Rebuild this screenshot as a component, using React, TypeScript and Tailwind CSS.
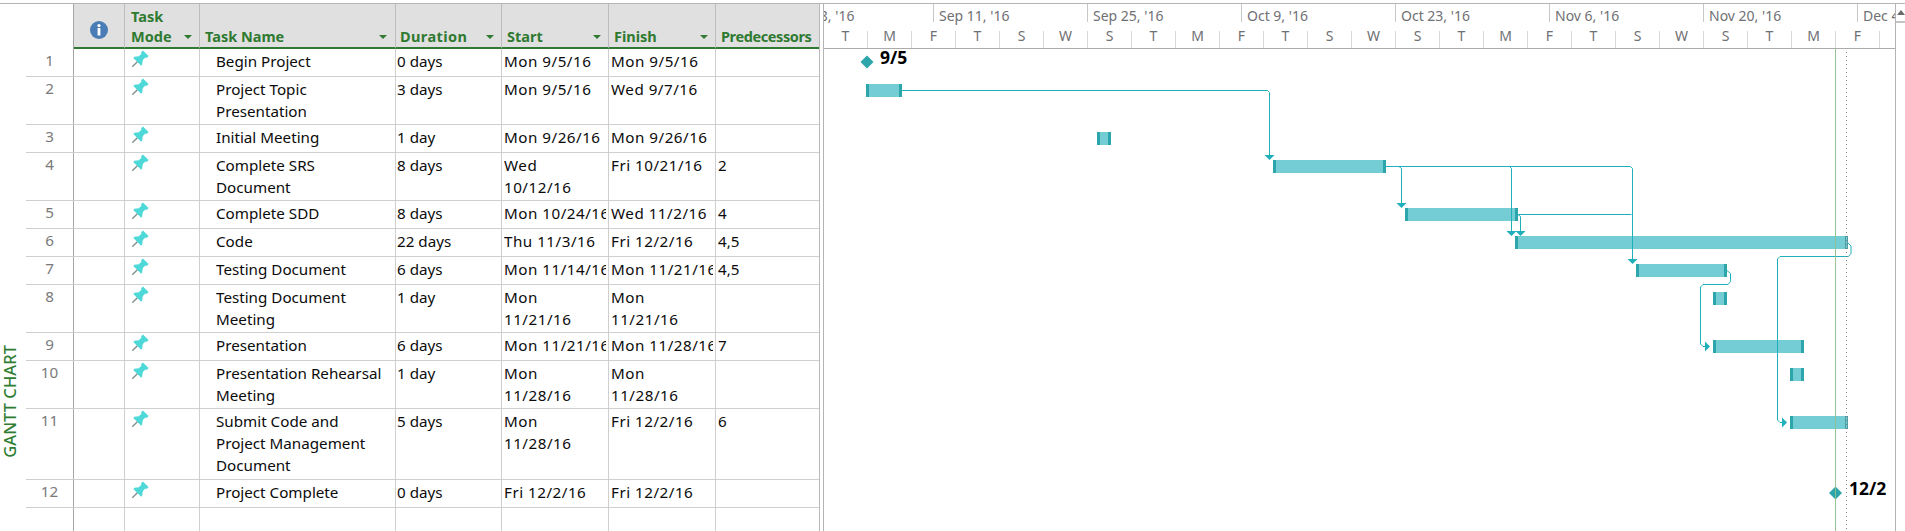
const rows = [
  { id: "1", h: "h-[28px]", name: "Begin Project", dur: "0 days", start: "Mon 9/5/16", finish: "Mon 9/5/16", pred: "" },
  { id: "2", h: "h-[48px]", name: "Project Topic\nPresentation", dur: "3 days", start: "Mon 9/5/16", finish: "Wed 9/7/16", pred: "" },
  { id: "3", h: "h-[28px]", name: "Initial Meeting", dur: "1 day", start: "Mon 9/26/16", finish: "Mon 9/26/16", pred: "" },
  { id: "4", h: "h-[48px]", name: "Complete SRS\nDocument", dur: "8 days", start: "Wed\n10/12/16", finish: "Fri 10/21/16", pred: "2" },
  { id: "5", h: "h-[28px]", name: "Complete SDD", dur: "8 days", start: "Mon 10/24/16", finish: "Wed 11/2/16", pred: "4" },
  { id: "6", h: "h-[28px]", name: "Code", dur: "22 days", start: "Thu 11/3/16", finish: "Fri 12/2/16", pred: "4,5" },
  { id: "7", h: "h-[28px]", name: "Testing Document", dur: "6 days", start: "Mon 11/14/16", finish: "Mon 11/21/16", pred: "4,5" },
  { id: "8", h: "h-[48px]", name: "Testing Document\nMeeting", dur: "1 day", start: "Mon\n11/21/16", finish: "Mon\n11/21/16", pred: "" },
  { id: "9", h: "h-[28px]", name: "Presentation", dur: "6 days", start: "Mon 11/21/16", finish: "Mon 11/28/16", pred: "7" },
  { id: "10", h: "h-[48px]", name: "Presentation Rehearsal\nMeeting", dur: "1 day", start: "Mon\n11/28/16", finish: "Mon\n11/28/16", pred: "" },
  { id: "11", h: "h-[71px]", name: "Submit Code and\nProject Management\nDocument", dur: "5 days", start: "Mon\n11/28/16", finish: "Fri 12/2/16", pred: "6" },
  { id: "12", h: "h-[28px]", name: "Project Complete", dur: "0 days", start: "Fri 12/2/16", finish: "Fri 12/2/16", pred: "" },
];

const majors = ["Sep 11, '16", "Sep 25, '16", "Oct 9, '16", "Oct 23, '16", "Nov 6, '16", "Nov 20, '16"];
const days = "TMFTSWSTMFTSWSTMFTSWSTMF".split("");

// x, x2, y for each task bar, in page pixels
const bars = [
  { x: 866, x2: 902, y: 84 },
  { x: 1097, x2: 1111, y: 132 },
  { x: 1273, x2: 1386, y: 160 },
  { x: 1405, x2: 1518, y: 208 },
  { x: 1515, x2: 1848, y: 236, open: true },
  { x: 1636, x2: 1727, y: 264 },
  { x: 1713, x2: 1727, y: 292 },
  { x: 1713, x2: 1804, y: 340 },
  { x: 1790, x2: 1804, y: 368 },
  { x: 1790, x2: 1848, y: 416, open: true },
];

const links = [
  "M902 90.5H1267.5L1269.5 92.5V156",
  "M1386 166.5H1630.5L1632.5 168.5V260",
  "M1399 166.5L1401.5 168.5V204",
  "M1509.5 166.5L1511.5 168.5V232",
  "M1518 214.5H1631.5",
  "M1518 214.5L1520.5 216.5V232",
  "M1848 243L1851 246V253.5L1848.5 256.5H1780L1777.5 259V420L1780 422.5H1783",
  "M1727 270.5L1730.5 273.5V281.5L1728 284.5H1703L1700.5 287V344L1703 346.5H1706",
];

const downArrows = [
  { x: 1269.5, y: 160 },
  { x: 1401.5, y: 208 },
  { x: 1511.5, y: 236 },
  { x: 1520.5, y: 236 },
  { x: 1632.5, y: 264 },
];
const rightArrows = [
  { x: 1710, y: 346.5 },
  { x: 1787, y: 422.5 },
];

function FilterArrow() {
  return <span className="mb-[7px] h-0 w-0 shrink-0 border-x-4 border-t-[4px] border-x-transparent border-t-[#2f7a30]" />;
}

function InfoIcon() {
  return (
    <svg width="18" height="18" viewBox="0 0 18 18">
      <circle cx="9" cy="9" r="9" fill="#4a7db5" />
      <circle cx="9" cy="4.6" r="1.6" fill="#fff" />
      <rect x="7.6" y="7" width="2.8" height="7.5" fill="#fff" />
    </svg>
  );
}

function PinIcon() {
  return (
    <svg width="16" height="16" viewBox="0 0 16 16" className="overflow-visible">
      <g transform="rotate(45 8 8)">
        <rect x="7.4" y="9" width="1.3" height="8.5" fill="#7d8a8c" />
        <path d="M4 -1.5H12V1L10.8 1.8V5.5L13.5 9V10.5H2.5V9L5.2 5.5V1.8L4 1Z" fill="#4fd8d8" />
      </g>
    </svg>
  );
}

function Cell({ text, className }: { text: string; className: string }) {
  return (
    <div className={`shrink-0 border-r border-[#cfcfcf] pt-[1px] pr-[2px] ${className}`}>
      <div className="overflow-hidden whitespace-pre">{text}</div>
    </div>
  );
}

function TaskTable() {
  return (
    <div className="flex w-[794px] shrink-0 flex-col border-r border-[#b9b9b9]">
      {/* Header */}
      <div className="flex h-[45px] shrink-0 text-[14.5px] leading-[20px] font-bold text-[#2f7a30]">
        <div className="w-[48px] shrink-0 border-r border-[#a6a6a6] bg-white" />
        <div className="flex w-[51px] shrink-0 items-center justify-center border-r border-b-2 border-[#bdbdbd] border-b-[#2f7a30] bg-[#e0e0e0] pt-[8px]">
          <InfoIcon />
        </div>
        <div className="flex w-[75px] shrink-0 items-end justify-between border-r border-b-2 border-[#bdbdbd] border-b-[#2f7a30] bg-[#e0e0e0] pr-[7px] pb-[1px] pl-[6px]">
          <span>
            Task
            <br />
            Mode
          </span>
          <FilterArrow />
        </div>
        <div className="flex w-[196px] shrink-0 items-end justify-between border-r border-b-2 border-[#bdbdbd] border-b-[#2f7a30] bg-[#e0e0e0] pr-[8px] pb-[1px] pl-[5px]">
          <span>Task Name</span>
          <FilterArrow />
        </div>
        <div className="flex w-[106px] shrink-0 items-end justify-between border-r border-b-2 border-[#bdbdbd] border-b-[#2f7a30] bg-[#e0e0e0] pr-[7px] pb-[1px] pl-[4px]">
          <span className="tracking-[0.4px]">Duration</span>
          <FilterArrow />
        </div>
        <div className="flex w-[107px] shrink-0 items-end justify-between border-r border-b-2 border-[#bdbdbd] border-b-[#2f7a30] bg-[#e0e0e0] pr-[7px] pb-[1px] pl-[5px]">
          <span>Start</span>
          <FilterArrow />
        </div>
        <div className="flex w-[107px] shrink-0 items-end justify-between border-r border-b-2 border-[#bdbdbd] border-b-[#2f7a30] bg-[#e0e0e0] pr-[7px] pb-[1px] pl-[5px]">
          <span>Finish</span>
          <FilterArrow />
        </div>
        <div className="flex flex-1 items-end border-b-2 border-b-[#2f7a30] bg-[#e0e0e0] pb-[1px] pl-[5px]">
          <span className="tracking-[-0.4px]">Predecessors</span>
        </div>
      </div>

      {/* Rows */}
      {rows.map((r) => (
        <div key={r.id} className={`flex shrink-0 border-b border-[#cfcfcf] text-[15.2px] leading-[22px] text-[#0b0b0b] ${r.h}`}>
          <div className="w-[48px] shrink-0 border-r border-[#a6a6a6] text-center text-[#7a7a7a]">{r.id}</div>
          <div className="w-[51px] shrink-0 border-r border-[#cfcfcf]" />
          <div className="w-[75px] shrink-0 border-r border-[#cfcfcf] pt-[3px] pl-[6px]">
            <PinIcon />
          </div>
          <Cell text={r.name} className="w-[196px] pl-[16px]" />
          <Cell text={r.dur} className="w-[106px] pl-[1px]" />
          <Cell text={r.start} className="w-[107px] pl-[2px] tracking-[0.5px]" />
          <Cell text={r.finish} className="w-[107px] pl-[2px] tracking-[0.5px]" />
          <div className="flex-1 pt-[1px] pl-[2px]">{r.pred}</div>
        </div>
      ))}

      {/* Empty row down to the bottom */}
      <div className="flex flex-1">
        <div className="w-[48px] border-r border-[#a6a6a6]" />
        <div className="w-[51px] border-r border-[#cfcfcf]" />
        <div className="w-[75px] border-r border-[#cfcfcf]" />
        <div className="w-[196px] border-r border-[#cfcfcf]" />
        <div className="w-[106px] border-r border-[#cfcfcf]" />
        <div className="w-[107px] border-r border-[#cfcfcf]" />
        <div className="w-[107px] border-r border-[#cfcfcf]" />
      </div>
    </div>
  );
}

function Timescale() {
  return (
    <div className="h-[45px] shrink-0 border-b border-[#ababab] text-[14px] text-[#6f7074]">
      <div className="flex h-[18px] leading-[24px]">
        <div className="w-[110px] shrink-0 overflow-x-clip border-r border-[#c8c8c8] whitespace-nowrap">
          <span className="ml-[-42px] inline-block">Aug 28, '16</span>
        </div>
        {majors.map((m) => (
          <div key={m} className="w-[154px] shrink-0 border-r border-[#c8c8c8] pl-[5px] whitespace-nowrap">
            {m}
          </div>
        ))}
        <div className="shrink-0 pl-[5px] whitespace-nowrap">Dec 4</div>
      </div>
      <div className="mt-[9px] flex h-[17px] leading-[10px]">
        {days.map((d, i) => (
          <div key={i} className="w-[44px] shrink-0 border-r border-[#d8d8d8] text-center">
            {d}
          </div>
        ))}
      </div>
    </div>
  );
}

function GanttBars() {
  return (
    <svg className="block h-[482px] w-[1071px]" viewBox="824 49 1071 482">
      <g shapeRendering="crispEdges">
        {bars.map((b) => (
          <g key={b.y}>
            <rect x={b.x} y={b.y} width={b.x2 - b.x} height={13} fill="#74cdd5" />
            <rect x={b.x} y={b.y} width={3} height={13} fill="#2ca5ab" />
            {b.open ? (
              <rect x={b.x2 - 2.5} y={b.y + 0.5} width={2} height={12} fill="none" stroke="#4f9ea5" />
            ) : (
              <rect x={b.x2 - 3} y={b.y} width={3} height={13} fill="#2ca5ab" />
            )}
          </g>
        ))}
      </g>

      {links.map((d) => (
        <path key={d} d={d} fill="none" stroke="#1fb0bb" strokeWidth="1" />
      ))}
      {downArrows.map((a) => (
        <path key={`${a.x}-${a.y}`} d={`M${a.x - 5} ${a.y - 5}H${a.x + 5}L${a.x} ${a.y}Z`} fill="#1fb0bb" />
      ))}
      {rightArrows.map((a) => (
        <path key={a.y} d={`M${a.x - 5} ${a.y - 5}V${a.y + 5}L${a.x} ${a.y}Z`} fill="#1fb0bb" />
      ))}

      {/* milestones */}
      <path d="M867 55.5L873.5 62L867 68.5L860.5 62Z" fill="#2ca5ab" />
      <path d="M1835.5 486.5L1842 493L1835.5 499.5L1829 493Z" fill="#2ca5ab" />

      {/* today and status lines */}
      <line x1="1835.5" y1="49" x2="1835.5" y2="531" stroke="#8fc08f" strokeWidth="1" opacity="0.9" />
      <line x1="1846.5" y1="52" x2="1846.5" y2="531" stroke="#808080" strokeWidth="1" strokeDasharray="1 3" />

      <text x="880" y="64" fontSize="17.5" fontWeight="700" fill="#000">
        9/5
      </text>
      <text x="1849" y="495" fontSize="17.5" fontWeight="700" fill="#000">
        12/2
      </text>
    </svg>
  );
}

export default function App() {
  return (
    <div className="h-[531px] w-[1905px] overflow-hidden bg-white pt-[3px] font-['Noto_Sans',sans-serif]">
      <div className="flex h-[528px] border-t border-[#b4b4b4]">
        <div className="flex w-[26px] shrink-0 flex-col justify-end pb-[73px]">
          <span className="rotate-180 text-[16.6px] leading-[20px] font-medium whitespace-nowrap text-[#2f7d32] [writing-mode:vertical-rl]">
            GANTT CHART
          </span>
        </div>
        <TaskTable />
        <div className="w-[3px] shrink-0" />
        <div className="flex w-[1073px] shrink-0 flex-col overflow-hidden border-x border-[#b4b4b4]">
          <Timescale />
          <GanttBars />
        </div>
        <div className="w-[9px] shrink-0">
          <div className="flex h-[19px] items-center justify-center border-b-2 border-[#c4c4c4]">
            <span className="h-0 w-0 border-x-[4px] border-b-[5px] border-x-transparent border-b-[#6a6a6a]" />
          </div>
        </div>
      </div>
    </div>
  );
}
